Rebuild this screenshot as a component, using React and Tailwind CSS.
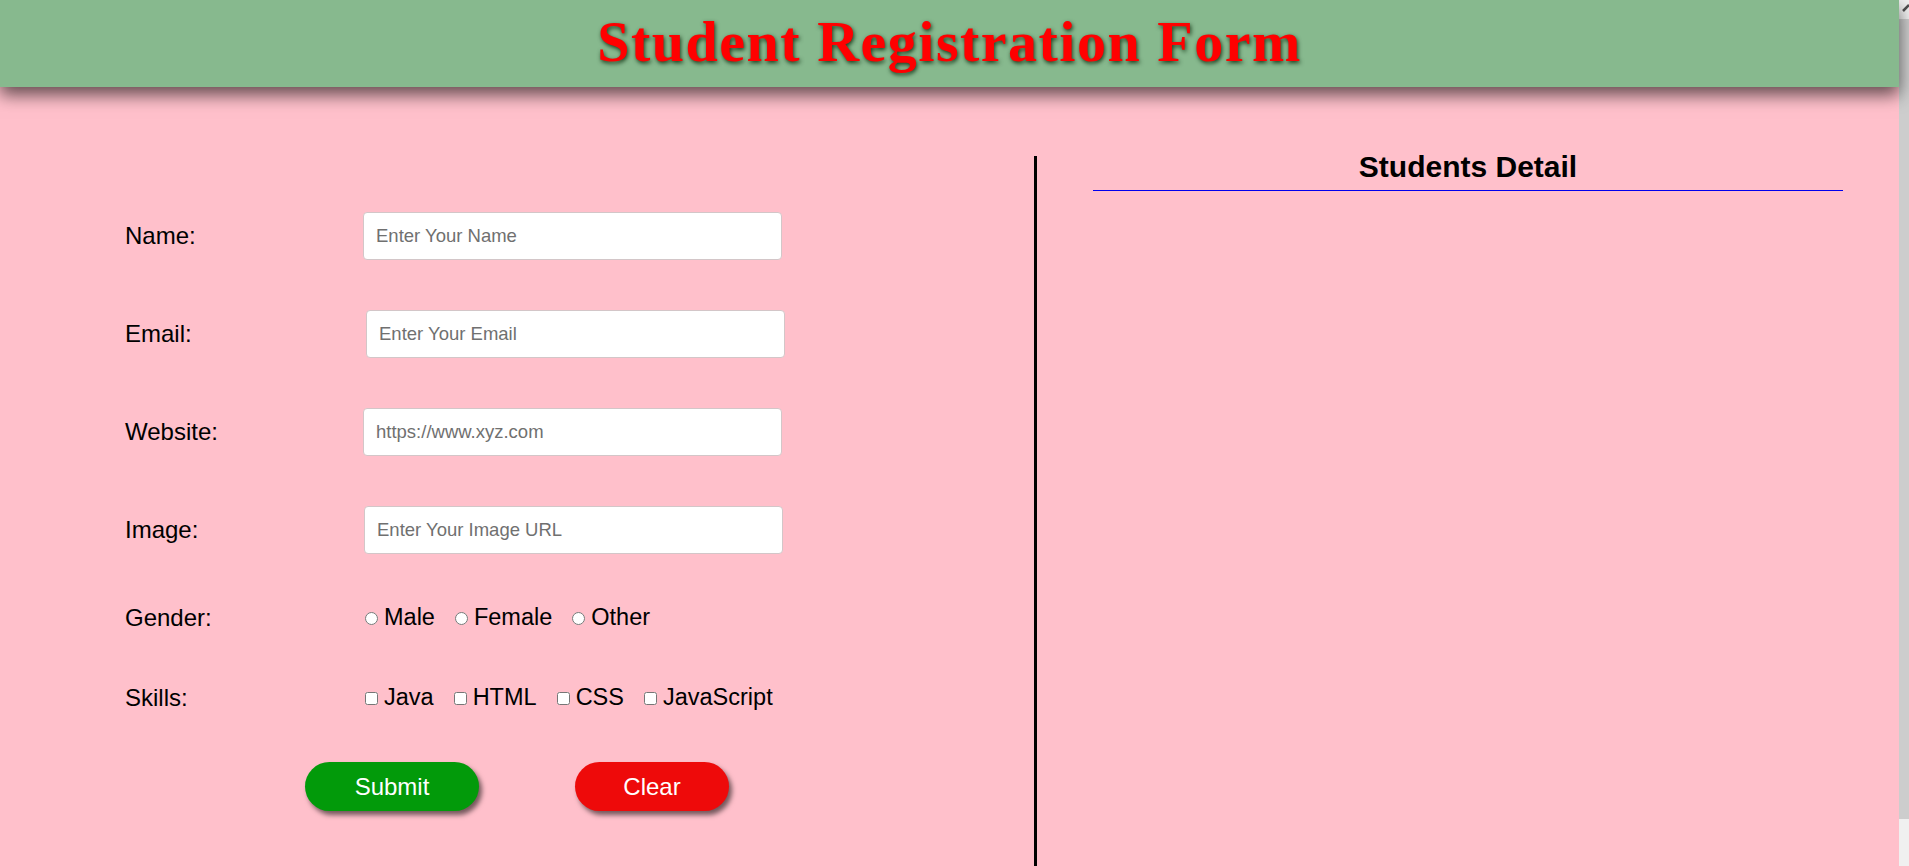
import React from "react";

function TextRow({ label, placeholder, offset = "" }) {
  return (
    <div className="flex h-[48px] items-center">
      <label className="w-[238px] shrink-0 text-[24px] leading-normal text-black">{label}</label>
      <input
        type="text"
        placeholder={placeholder}
        className={`h-[48px] w-[419px] rounded-[4px] border border-[#d3c6c8] bg-white px-[12px] text-[18.5px] text-black outline-none placeholder:text-[#707070] ${offset}`}
      />
    </div>
  );
}

export default function App() {
  return (
    <div className="flex h-[866px] w-full overflow-hidden bg-[#ffc0cb] font-['Liberation_Sans',Arial,sans-serif] text-black">
      <div className="flex min-w-0 flex-1 flex-col">
        <header className="relative z-10 flex h-[87px] shrink-0 justify-center bg-[#87b98e] shadow-[0_8px_16px_rgba(0,0,0,0.6)]">
          <h1 className="-mt-[2px] font-['Liberation_Serif','Times_New_Roman',serif] text-[58px] font-bold leading-normal tracking-[1.5px] text-[#ff0000] [text-shadow:1px_2px_4px_rgba(0,30,0,0.8)]">
            Student Registration Form
          </h1>
        </header>

        <main className="mt-[62px] flex flex-1">
          <section className="w-[1034px] shrink-0 pl-[125px] pt-[63px]">
            <form className="flex flex-col" onSubmit={(e) => e.preventDefault()}>
              <TextRow label="Name:" placeholder="Enter Your Name" />
              <div className="mt-[50px]">
                <TextRow label="Email:" placeholder="Enter Your Email" offset="ml-[3px]" />
              </div>
              <div className="mt-[50px]">
                <TextRow label="Website:" placeholder="https://www.xyz.com" />
              </div>
              <div className="mt-[50px]">
                <TextRow label="Image:" placeholder="Enter Your Image URL" offset="ml-[1px]" />
              </div>

              <div className="mt-[46px] flex items-center">
                <span className="w-[238px] shrink-0 text-[24px] leading-normal">Gender:</span>
                <div className="ml-[2px] flex items-center text-[23.5px] leading-normal">
                  <input type="radio" name="gender" className="m-0 h-[13px] w-[13px]" />
                  <span className="ml-[6px]">Male</span>
                  <input type="radio" name="gender" className="m-0 ml-[20px] h-[13px] w-[13px]" />
                  <span className="ml-[6px]">Female</span>
                  <input type="radio" name="gender" className="m-0 ml-[20px] h-[13px] w-[13px]" />
                  <span className="ml-[6px]">Other</span>
                </div>
              </div>

              <div className="mt-[44px] flex items-center">
                <span className="w-[238px] shrink-0 text-[24px] leading-normal">Skills:</span>
                <div className="ml-[2px] flex items-center text-[23.5px] leading-normal">
                  <input type="checkbox" className="m-0 h-[13px] w-[13px]" />
                  <span className="ml-[6px]">Java</span>
                  <input type="checkbox" className="m-0 ml-[20px] h-[13px] w-[13px]" />
                  <span className="ml-[6px]">HTML</span>
                  <input type="checkbox" className="m-0 ml-[20px] h-[13px] w-[13px]" />
                  <span className="ml-[6px]">CSS</span>
                  <input type="checkbox" className="m-0 ml-[20px] h-[13px] w-[13px]" />
                  <span className="ml-[6px]">JavaScript</span>
                </div>
              </div>

              <div className="ml-[180px] mt-[46px] flex items-center">
                <button
                  type="submit"
                  className="h-[49px] w-[174px] rounded-full bg-[#029a0a] text-[24px] text-white shadow-[3px_4px_5px_rgba(0,0,0,0.55)]"
                >
                  Submit
                </button>
                <button
                  type="reset"
                  className="ml-[96px] h-[49px] w-[154px] rounded-full bg-[#ee0a0a] text-[24px] text-white shadow-[3px_4px_5px_rgba(0,0,0,0.55)]"
                >
                  Clear
                </button>
              </div>
            </form>
          </section>

          <div className="mt-[7px] w-[3px] shrink-0 bg-black" />

          <section className="flex-1 px-[56px]">
            <h2 className="-mt-[5px] text-center text-[30px] font-bold leading-normal">Students Detail</h2>
            <div className="mt-[1px] h-px bg-[#0000ee]" />
          </section>
        </main>
      </div>

      <div className="flex w-[10px] shrink-0 flex-col bg-[#f0f0f0]">
        <div className="h-[19px] shrink-0">
          <svg width="10" height="19" viewBox="0 0 10 19">
            <path d="M4 11 L10 5" stroke="#505050" strokeWidth="2.5" fill="none" />
          </svg>
        </div>
        <div className="h-[800px] shrink-0 bg-[#cdcdcd]" />
        <div className="flex-1" />
      </div>
    </div>
  );
}
